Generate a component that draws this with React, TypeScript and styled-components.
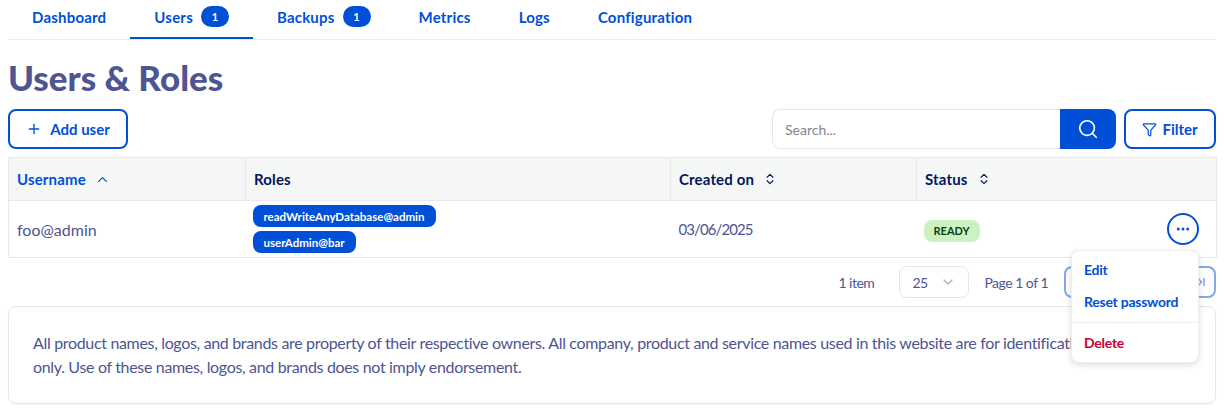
import styled, { createGlobalStyle } from 'styled-components'
import { ChevronDown, ChevronUp, ChevronsUpDown, Ellipsis, Filter, Plus, Search } from 'lucide-react'

const GlobalStyle = createGlobalStyle`
	* { box-sizing: border-box; }
	html, body { margin: 0; background: #fff; }
	body {
		font-family: "Lato", "Open Sans", sans-serif;
		color: #4d5592;
		font-size: 16px;
	}
`

const Page = styled.div`
	position: relative;
	width: 1224px;
	height: 413px;
	padding: 0 8px;
	overflow: hidden;
`

const Tabs = styled.nav`
	display: flex;
	height: 40px;
	border-bottom: 1px solid #e6effb;
`

const Tab = styled.a<{ $active?: boolean }>`
	display: flex;
	align-items: center;
	gap: 8px;
	height: 39px;
	padding: 0 24px 4px;
	font-size: 15px;
	font-weight: 700;
	letter-spacing: 0.2px;
	color: #0050d7;
	border-bottom: 2px solid ${p => (p.$active ? '#0050d7' : 'transparent')};
`

const TabBadge = styled.span`
	display: inline-flex;
	align-items: center;
	justify-content: center;
	width: 28px;
	height: 21px;
	border-radius: 11px;
	background: #0050d7;
	color: #fff;
	font-size: 11px;
	font-weight: 700;
`

const Title = styled.h1`
	margin: 0;
	height: 69px;
	padding-top: 16px;
	font-size: 35px;
	line-height: 43px;
	font-weight: 900;
	color: #4d5592;
`

const Toolbar = styled.div`
	display: flex;
	justify-content: space-between;
	height: 40px;
`

const OutlineButton = styled.button<{ $width: number }>`
	display: flex;
	align-items: center;
	justify-content: center;
	gap: ${p => (p.$width < 100 ? 5 : 8)}px;
	width: ${p => p.$width}px;
	height: 40px;
	padding: 0;
	background: #fff;
	border: 2px solid #0050d7;
	border-radius: 8px;
	color: #0050d7;
	font-family: inherit;
	font-size: 15px;
	font-weight: 700;
`

const SearchArea = styled.div`
	display: flex;
	gap: 8px;
`

const SearchBox = styled.div`
	display: flex;
	width: 344px;
	height: 40px;
`

const SearchInput = styled.div`
	flex: 1;
	display: flex;
	align-items: center;
	padding-left: 12px;
	border: 1px solid #e3e6e8;
	border-right: none;
	border-radius: 8px 0 0 8px;
	font-size: 14px;
	color: #7f8690;
`

const SearchButton = styled.button`
	display: flex;
	align-items: center;
	justify-content: center;
	width: 56px;
	padding: 0;
	border: none;
	border-radius: 0 8px 8px 0;
	background: #0050d7;
	color: #fff;
`

const Table = styled.table`
	width: 1208px;
	margin-top: 8px;
	border-collapse: collapse;
	table-layout: fixed;
`

const Column = styled.col<{ $width: number }>`
	width: ${p => p.$width}px;
`

const HeadCell = styled.th`
	height: 43px;
	padding: 0 8px;
	text-align: left;
	background: #f5f7f7;
	border: 1px solid #e6e8ea;
	font-size: 15px;
	font-weight: 700;
	letter-spacing: 0.15px;
	color: #00185e;
`

const HeadInner = styled.span<{ $sorted?: boolean }>`
	display: flex;
	align-items: center;
	gap: 9px;
	color: ${p => (p.$sorted ? '#0050d7' : '#00185e')};
`

const Row = styled.tr`
	height: 57px;
	border: 1px solid #e6e8ea;
`

const Cell = styled.td`
	padding: 0 8px;
	font-size: 15px;
	color: #4d5592;
`

const NameCell = styled(Cell)`
	font-size: 16px;
`

const DateCell = styled(Cell)`
	letter-spacing: -0.9px;
`

const RoleList = styled.div`
	display: flex;
	flex-direction: column;
	align-items: flex-start;
	gap: 4px;
	margin-left: -1px;
`

const RoleTag = styled.span`
	display: inline-flex;
	align-items: center;
	height: 22px;
	padding: 0 11px;
	border-radius: 8px;
	background: #0050d7;
	color: #fff;
	font-size: 11.5px;
	font-weight: 700;
`

const StatusRow = styled.div`
	display: flex;
	align-items: center;
	justify-content: space-between;
	padding-right: 9px;
	margin-left: -1px;
`

const StatusTag = styled.span`
	display: inline-flex;
	align-items: center;
	height: 22px;
	margin-top: 3px;
	padding: 0 10px;
	border-radius: 8px;
	background: #cdf2c2;
	color: #0d3d0d;
	font-size: 11px;
	font-weight: 700;
`

const RoundButton = styled.button`
	display: inline-flex;
	align-items: center;
	justify-content: center;
	width: 32px;
	height: 32px;
	padding: 0;
	background: #fff;
	border: 2px solid #0050d7;
	border-radius: 50%;
	color: #0050d7;
`

const Pagination = styled.div`
	display: flex;
	align-items: center;
	justify-content: flex-end;
	height: 32px;
	margin-top: 8px;
	font-size: 14px;
	letter-spacing: -0.5px;
`

const ItemCount = styled.span`
	margin-right: 25px;
`

const PageSelect = styled.div`
	display: flex;
	align-items: center;
	justify-content: space-between;
	width: 70px;
	height: 32px;
	padding: 0 12px;
	margin-right: 15px;
	border: 1px solid #e3e6e8;
	border-radius: 8px;
	color: #4d5592;
`

const PageLabel = styled.span`
	margin-right: 16px;
`

const PagerGroup = styled.div`
	display: flex;
	align-items: center;
	justify-content: flex-end;
	width: 152px;
	height: 32px;
	padding-right: 9px;
	border: 2px solid #80a8eb;
	border-radius: 8px;
	color: #80a8eb;
`

const Notice = styled.div`
	height: 98px;
	margin-top: 8px;
	padding: 24px 24px;
	border: 1px solid #e3e6e8;
	border-radius: 8px;
	box-shadow: 0 1px 2px rgba(0, 0, 0, 0.04);
	font-size: 16px;
	line-height: 24px;
	letter-spacing: -0.33px;
	color: #4d5592;
`

const Menu = styled.div`
	position: absolute;
	top: 250px;
	left: 1071px;
	width: 128px;
	height: 113px;
	padding: 2px 0;
	background: #fff;
	border: 1px solid #eceef0;
	border-radius: 8px;
	box-shadow: 0 2px 6px rgba(0, 0, 0, 0.14);
`

const MenuItem = styled.div<{ $danger?: boolean }>`
	display: flex;
	align-items: center;
	height: 32px;
	padding-left: 12px;
	font-size: 14px;
	font-weight: 700;
	letter-spacing: -0.25px;
	color: ${p => (p.$danger ? '#c8002f' : '#0050d7')};
`

const MenuDivider = styled.hr`
	margin: 5px 0 3px;
	border: none;
	border-top: 1px solid #eceef0;
`

const tabs = [
	{ label: 'Dashboard' },
	{ label: 'Users', badge: 1, active: true },
	{ label: 'Backups', badge: 1 },
	{ label: 'Metrics' },
	{ label: 'Logs' },
	{ label: 'Configuration' },
]

export default function App() {
	return (
		<Page>
			<GlobalStyle />
			<Tabs>
				{tabs.map(tab => (
					<Tab key={tab.label} $active={tab.active}>
						{tab.label}
						{tab.badge && <TabBadge>{tab.badge}</TabBadge>}
					</Tab>
				))}
			</Tabs>
			<Title>Users &amp; Roles</Title>
			<Toolbar>
				<OutlineButton $width={120}>
					<Plus size={16} strokeWidth={2} />
					Add user
				</OutlineButton>
				<SearchArea>
					<SearchBox>
						<SearchInput>Search...</SearchInput>
						<SearchButton>
							<Search size={22} strokeWidth={1.8} />
						</SearchButton>
					</SearchBox>
					<OutlineButton $width={92}>
						<Filter size={15} strokeWidth={2} />
						Filter
					</OutlineButton>
				</SearchArea>
			</Toolbar>
			<Table>
				<colgroup>
					<Column $width={237} />
					<Column $width={425} />
					<Column $width={246} />
					<Column $width={300} />
				</colgroup>
				<thead>
					<tr>
						<HeadCell>
							<HeadInner $sorted>
								Username <ChevronUp size={15} strokeWidth={2} />
							</HeadInner>
						</HeadCell>
						<HeadCell>
							<HeadInner>Roles</HeadInner>
						</HeadCell>
						<HeadCell>
							<HeadInner>
								Created on <ChevronsUpDown size={14} strokeWidth={2} />
							</HeadInner>
						</HeadCell>
						<HeadCell>
							<HeadInner>
								Status <ChevronsUpDown size={14} strokeWidth={2} />
							</HeadInner>
						</HeadCell>
					</tr>
				</thead>
				<tbody>
					<Row>
						<NameCell>foo@admin</NameCell>
						<Cell>
							<RoleList>
								<RoleTag>readWriteAnyDatabase@admin</RoleTag>
								<RoleTag>userAdmin@bar</RoleTag>
							</RoleList>
						</Cell>
						<DateCell>03/06/2025</DateCell>
						<Cell>
							<StatusRow>
								<StatusTag>READY</StatusTag>
								<RoundButton>
									<Ellipsis size={16} strokeWidth={2.5} />
								</RoundButton>
							</StatusRow>
						</Cell>
					</Row>
				</tbody>
			</Table>
			<Pagination>
				<ItemCount>1 item</ItemCount>
				<PageSelect>
					25 <ChevronDown size={16} color="#aab0bb" />
				</PageSelect>
				<PageLabel>Page 1 of 1</PageLabel>
				<PagerGroup>
					<svg width="8" height="10" viewBox="0 0 8 10" fill="none" stroke="currentColor" strokeWidth="1.5">
						<path d="M1 1l3.5 4L1 9M7 1v8" />
					</svg>
				</PagerGroup>
			</Pagination>
			<Notice>
				All product names, logos, and brands are property of their respective owners. All company, product and service
				names used in this website are for identification purposes
				<br />
				only. Use of these names, logos, and brands does not imply endorsement.
			</Notice>
			<Menu>
				<MenuItem>Edit</MenuItem>
				<MenuItem>Reset password</MenuItem>
				<MenuDivider />
				<MenuItem $danger>Delete</MenuItem>
			</Menu>
		</Page>
	)
}
